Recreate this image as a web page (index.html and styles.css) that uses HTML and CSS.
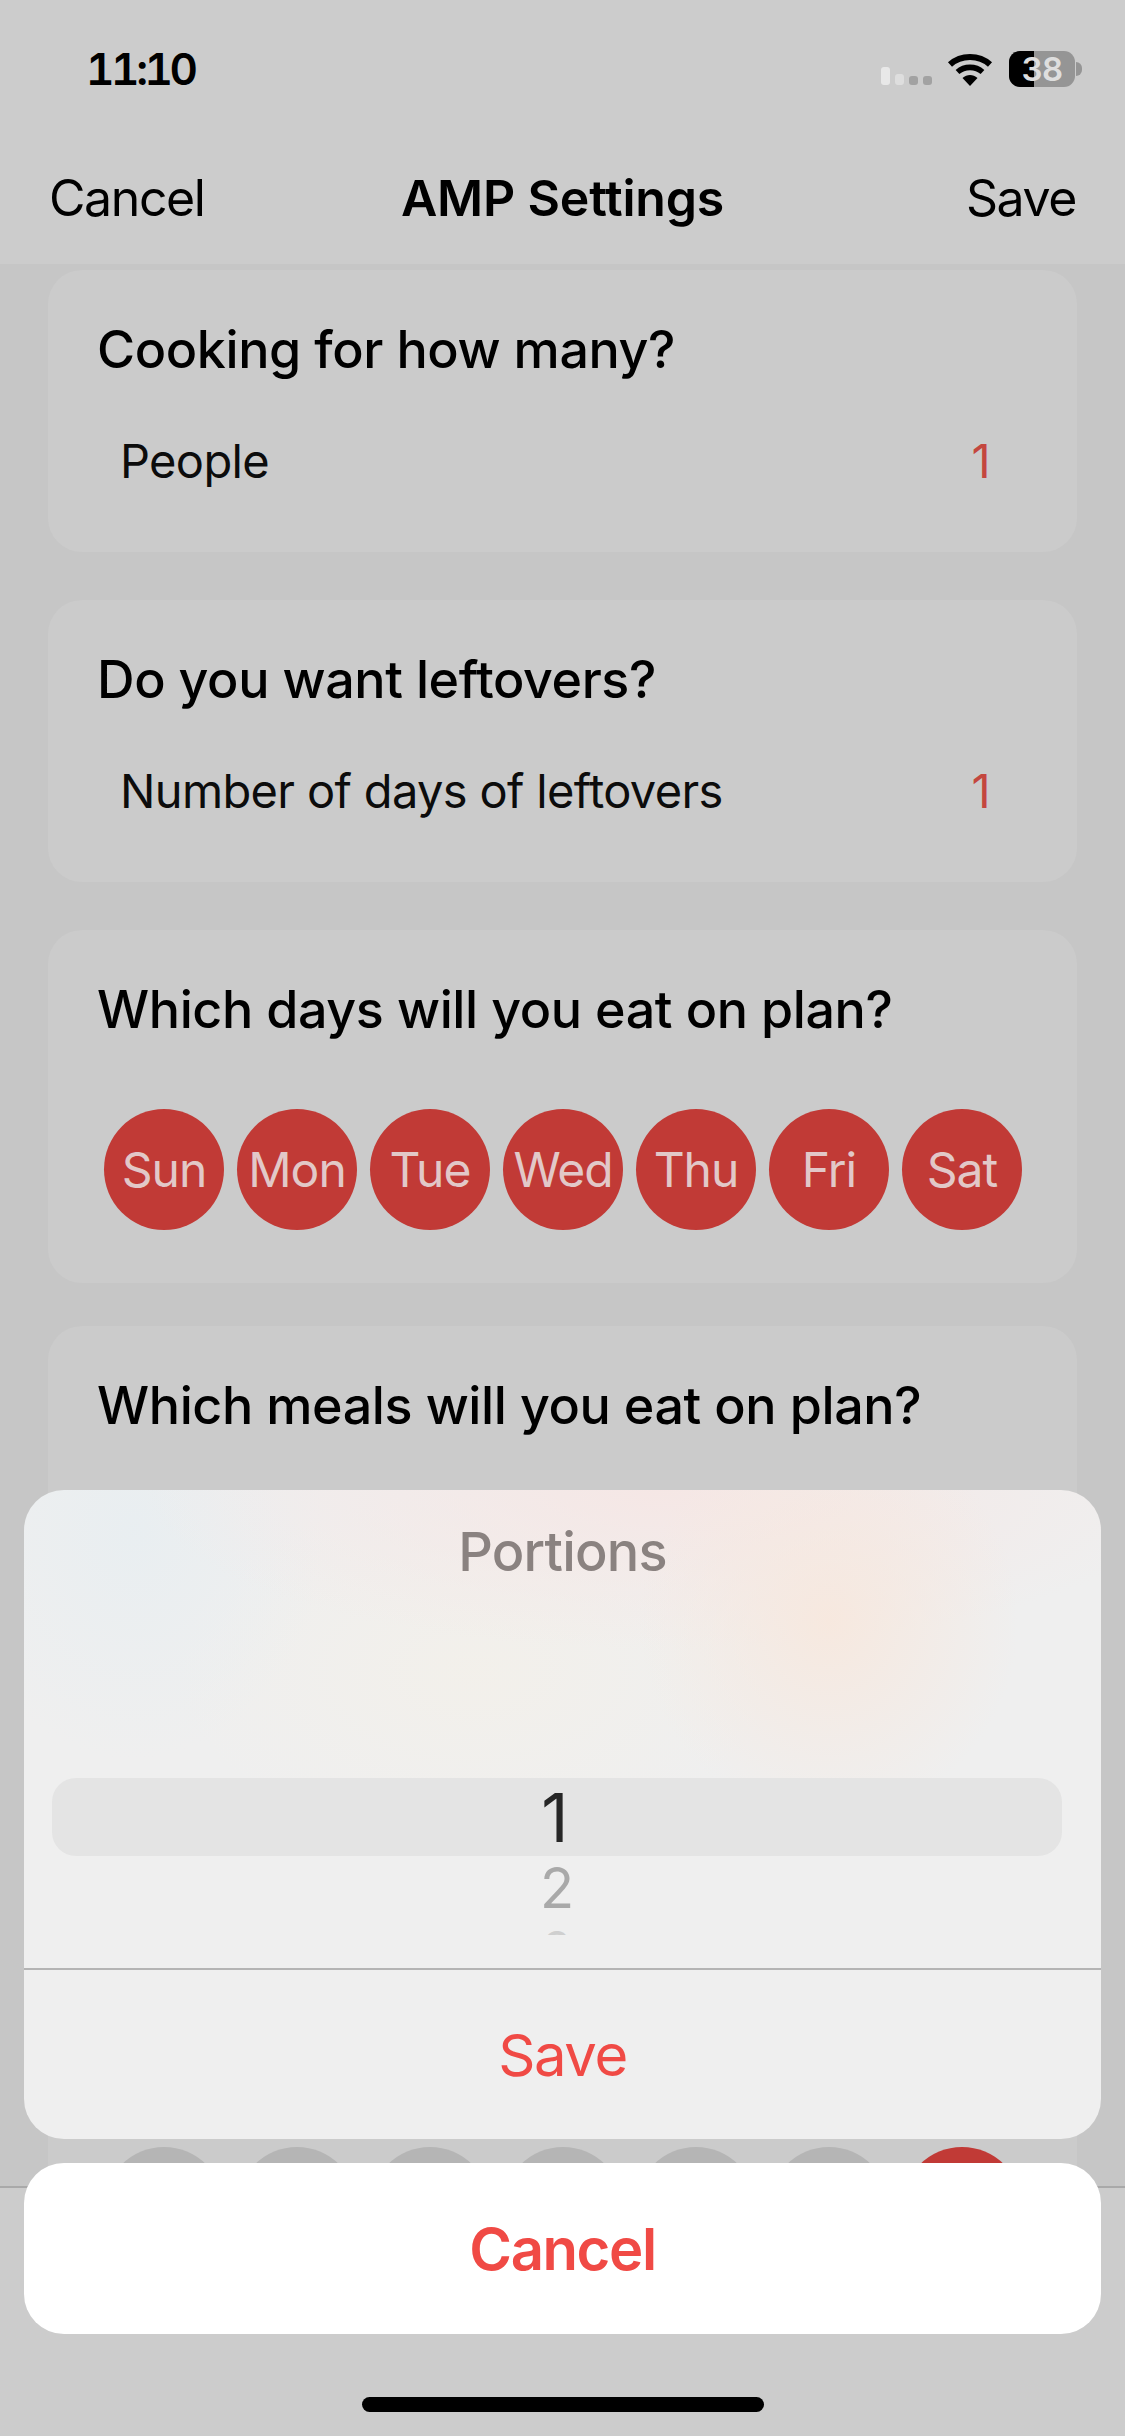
FILE: index.html
```html
<!DOCTYPE html>
<html lang="en">
<head>
<meta charset="utf-8">
<title>AMP Settings</title>
<link rel="stylesheet" href="styles.css">
</head>
<body>
<div class="phone">
  <div class="status">
    <span class="time">11:10</span>
    <div class="status-icons">
      <div class="signal"><i class="b1"></i><i class="b2"></i><i class="b3"></i><i class="b3"></i></div>
      <svg class="wifi" width="46" height="34" viewBox="0 0 46 34">
        <path d="M3 12.5C14 2.5 32 2.5 43 12.5" fill="none" stroke="#000" stroke-width="6"/>
        <path d="M10.5 20C17.5 13.8 28.5 13.8 35.5 20" fill="none" stroke="#000" stroke-width="5.6"/>
        <path d="M15.5 26L23 34L30.5 26C26 22 20 22 15.5 26Z" fill="#000"/>
      </svg>
      <div class="battery">
        <div class="battery-body"><div class="battery-fill"></div><span class="battery-num">38</span></div>
        <div class="battery-nub"></div>
      </div>
    </div>
  </div>
  <header class="nav">
    <span>Cancel</span>
    <strong class="nav-title">AMP Settings</strong>
    <span class="nav-save">Save</span>
  </header>
  <main class="content">
    <section class="card">
      <h2 class="card-title">Cooking for how many?</h2>
      <div class="row"><span>People</span><span class="row-value">1</span></div>
    </section>
    <section class="card">
      <h2 class="card-title">Do you want leftovers?</h2>
      <div class="row"><span>Number of days of leftovers</span><span class="row-value">1</span></div>
    </section>
    <section class="card card-tight">
      <h2 class="card-title">Which days will you eat on plan?</h2>
      <div class="days">
        <span class="day">Sun</span><span class="day">Mon</span><span class="day">Tue</span><span class="day">Wed</span><span class="day">Thu</span><span class="day">Fri</span><span class="day">Sat</span>
      </div>
    </section>
    <section class="card">
      <h2 class="card-title">Which meals will you eat on plan?</h2>
      <div class="days days-low">
        <span class="day off"></span><span class="day off"></span><span class="day off"></span><span class="day off"></span><span class="day off"></span><span class="day off"></span><span class="day"></span>
      </div>
    </section>
  </main>
  <div class="toolbar"></div>
  <div class="sheet-wrap">
    <div class="sheet">
      <div class="sheet-title">Portions</div>
      <div class="picker">
        <div class="picker-sel">1</div>
        <div class="picker-next">2</div>
        <div class="picker-far">3</div>
      </div>
      <div class="sheet-save">Save</div>
    </div>
    <div class="sheet-cancel">Cancel</div>
  </div>
  <div class="home"></div>
</div>
</body>
</html>
```
FILE: styles.css
```css
* { box-sizing: border-box; }
html, body { margin: 0; padding: 0; }
body { font-family: Inter, "Liberation Sans", sans-serif; color: #000; background: #c6c6c6; }
.phone { position: relative; width: 1125px; height: 2436px; overflow: hidden; background: #c6c6c6; display: flex; flex-direction: column; }

.status { height: 100px; flex: none; background: #cccccc; display: flex; justify-content: space-between; padding: 44px 43px 0 86px; }
.time { font-size: 44px; line-height: 50px; font-weight: 600; letter-spacing: -3.4px; font-variant-numeric: tabular-nums; }
.status-icons { display: flex; align-items: flex-start; }
.signal { display: flex; align-items: flex-end; gap: 5px; height: 18px; margin: 23px 15px 0 0; }
.signal i { display: block; width: 9px; border-radius: 3px; }
.b1 { height: 18px; background: #e8e8e8; }
.b2 { height: 11px; background: #dedede; }
.b3 { height: 9px; background: #a2a2a2; }
.wifi { margin: 8px 16px 0 0; }
.battery { display: flex; align-items: center; margin-top: 7px; }
.battery-body { position: relative; width: 66px; height: 36px; border-radius: 11px; background: #959595; display: flex; align-items: center; justify-content: center; }
.battery-fill { position: absolute; left: 0; top: 0; bottom: 0; width: 25px; background: #000; border-radius: 11px 0 0 11px; }
.battery-num { position: relative; font-size: 33px; font-weight: 600; color: #dedede; letter-spacing: -0.5px; line-height: 36px; }
.battery-nub { width: 6px; height: 14px; margin-left: 1px; background: #959595; border-radius: 0 7px 7px 0; }

.nav { height: 164px; flex: none; background: #cccccc; display: grid; grid-template-columns: 1fr auto 1fr; align-items: center; padding: 32px 49px 0; font-size: 50px; letter-spacing: -1.4px; }
.nav-title { font-weight: 600; letter-spacing: -0.2px; }
.nav-save { justify-self: end; }

.content { flex: none; padding: 6px 48px 0; display: flex; flex-direction: column; gap: 48px; }
.card { background: #cbcbcb; border-radius: 34px; padding: 50px 49px 0; }
.card-tight { margin-bottom: -5px; }
.card-title { margin: 0; font-size: 52px; line-height: 60px; font-weight: 500; letter-spacing: -0.4px; }
.row { display: flex; justify-content: space-between; padding: 51px 38px 61px 23px; font-size: 47px; line-height: 60px; letter-spacing: -0.65px; color: #0c0c0c; }
.row-value { color: #c4473f; }
.days { display: flex; gap: 13px; margin: 69px 0 53px 7px; }
.days-low { margin-top: 711px; }
.day { flex: none; width: 120px; height: 121px; border-radius: 50%; background: #c13a36; color: #e2c8c8; display: flex; align-items: center; justify-content: center; font-size: 48px; letter-spacing: -1px; }
.off { background: #b5b5b5; }

.toolbar { position: absolute; left: 0; right: 0; top: 2186px; bottom: 0; background: #cccccc; border-top: 2px solid #a9a9a9; }

.sheet-wrap { position: absolute; left: 24px; right: 24px; bottom: 102px; display: flex; flex-direction: column; gap: 24px; }
.sheet { height: 649px; border-radius: 40px; overflow: hidden; display: flex; flex-direction: column; background:
  radial-gradient(ellipse 190px 200px at 805px 130px, rgba(247,232,222,.95), rgba(247,232,222,0)),
  radial-gradient(ellipse 520px 160px at 640px 0, rgba(246,230,228,.9), rgba(246,230,228,0)),
  radial-gradient(ellipse 190px 230px at 110px 40px, rgba(232,238,241,.9), rgba(232,238,241,0)),
  radial-gradient(ellipse 300px 180px at 450px 180px, rgba(243,240,234,.9), rgba(243,240,234,0)),
  #efefef; }
.sheet-title { flex: none; height: 130px; padding-top: 32px; text-align: center; font-size: 54px; line-height: 60px; font-weight: 500; color: #8a8280; letter-spacing: -0.8px; }
.picker { flex: 1; margin-bottom: 33px; padding: 158px 15px 0 28px; overflow: hidden; }
.picker-sel { height: 78px; margin-right: 24px; padding-right: 4px; display: flex; align-items: center; justify-content: center; background: #e4e4e4; border-radius: 24px; font-size: 67px; font-weight: 400; color: #262626; }
.picker-next { height: 60px; line-height: 60px; margin-top: 2px; text-align: center; padding-right: 24px; font-size: 56px; font-weight: 400; color: #a9a9a9; }
.picker-far { height: 60px; line-height: 60px; text-align: center; padding-right: 24px; font-size: 46px; color: #cfcfcf; }
.sheet-save { flex: none; height: 171px; border-top: 2px solid #b4b4b4; display: flex; align-items: center; justify-content: center; font-size: 58px; color: #f04a45; letter-spacing: -1.4px; }
.sheet-cancel { height: 171px; background: #fff; border-radius: 40px; display: flex; align-items: center; justify-content: center; font-size: 58px; font-weight: 600; color: #f04a45; letter-spacing: -1.4px; }

.home { position: absolute; left: 362px; width: 402px; top: 2397px; height: 15px; background: #000; border-radius: 8px; }
```
